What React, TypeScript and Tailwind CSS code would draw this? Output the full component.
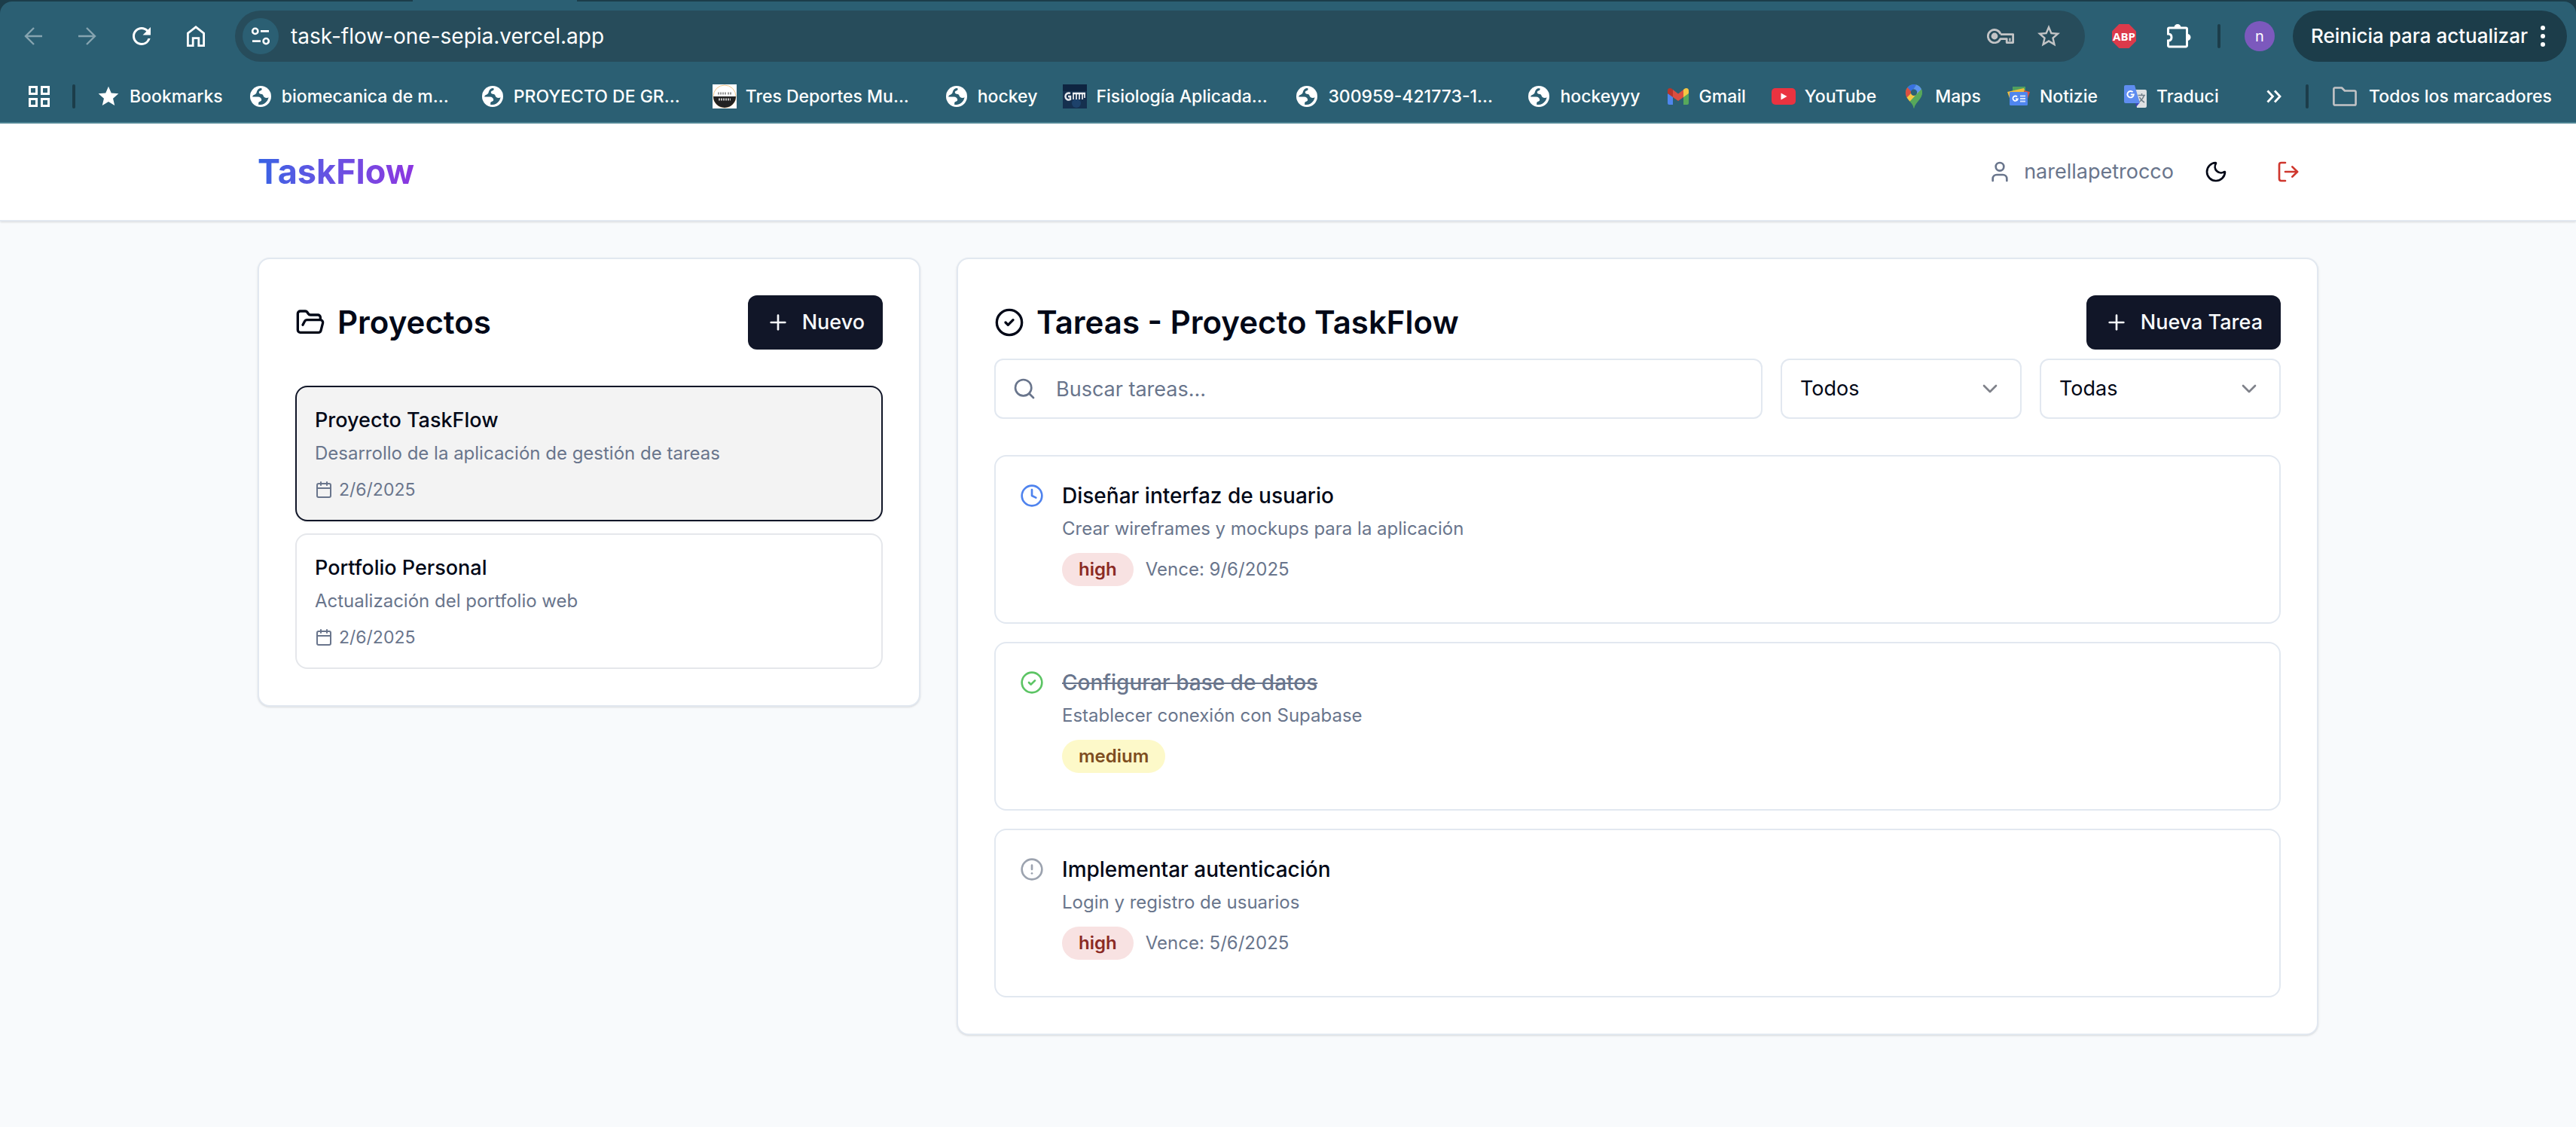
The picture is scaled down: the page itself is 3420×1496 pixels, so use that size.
import React from "react";
import {
  Calendar,
  ChevronDown,
  CircleAlert,
  CircleCheck,
  Clock,
  FolderOpen,
  LogOut,
  Moon,
  Plus,
  Search,
  User,
} from "lucide-react";
import { MdRefresh, MdStar, MdStarBorder } from "react-icons/md";

/* ---------- Browser glyphs ---------- */

function BackArrow({ className = "" }: { className?: string }) {
  return (
    <svg viewBox="0 0 24 24" className={`size-6 ${className}`} fill="none" stroke="currentColor" strokeWidth="2.4" aria-hidden="true">
      <path d="M24 12H2M13 1 2 12l11 11" />
    </svg>
  );
}

function HomeGlyph() {
  return (
    <svg viewBox="0 0 24 28" className="h-7 w-6" fill="none" stroke="currentColor" strokeWidth="2.8" aria-hidden="true">
      <path d="M1.4 10.2 12 1.8l10.6 8.4v16.4h-6.8v-10H8.2v10H1.4z" />
    </svg>
  );
}

function TuneGlyph() {
  return (
    <svg viewBox="0 0 24 24" className="size-6" fill="none" stroke="currentColor" strokeWidth="2.6" aria-hidden="true">
      <circle cx="4.8" cy="5.4" r="3.6" />
      <path d="M12 5.4h11M1 18.6h11" />
      <circle cx="19.2" cy="18.6" r="3.6" />
    </svg>
  );
}

function KeyGlyph() {
  return (
    <svg viewBox="0 0 36 20" className="h-5 w-9" fill="none" stroke="currentColor" strokeWidth="2.8" aria-hidden="true">
      <circle cx="10" cy="10" r="4.4" fill="currentColor" stroke="none" />
      <path d="M18 7.6h16.6v11h-8.4v-5h-8.4A8.6 8.6 0 1 1 18 7.2" strokeLinejoin="round" />
      <path d="M30.4 12.6v4" strokeWidth="2.2" />
    </svg>
  );
}

function AbpGlyph() {
  return (
    <svg viewBox="0 0 32 32" className="size-8" aria-hidden="true">
      <path d="M9.4 0h13.2L32 9.4v13.2L22.6 32H9.4L0 22.6V9.4z" fill="#dc3a4b" />
      <text x="16" y="21.5" textAnchor="middle" fontFamily="Open Sans, sans-serif" fontWeight="700" fontSize="15" fill="#fff">
        ABP
      </text>
    </svg>
  );
}

function PuzzleGlyph() {
  return (
    <svg viewBox="0 0 34 34" className="size-[34px]" aria-hidden="true">
      <path
        d="M5 6h22a1.5 1.5 0 0 1 1.5 1.5v22A1.5 1.5 0 0 1 27 31H5a1.5 1.5 0 0 1-1.5-1.5V23c3 0 4.500-2 4.500-4.500S6.500 14 3.500 14V7.500A1.500 1.500 0 0 1 5 6z"
        fill="none"
        stroke="currentColor"
        strokeWidth="3"
      />
      <path d="M11.500 5.500a4.500 4.500 0 0 1 9 0zM29 14a4.500 4.500 0 0 1 0 9z" fill="currentColor" />
    </svg>
  );
}

function DotsGlyph() {
  return (
    <svg viewBox="0 0 8 32" className="h-8 w-2" fill="currentColor" aria-hidden="true">
      <circle cx="4" cy="5" r="3" />
      <circle cx="4" cy="16" r="3" />
      <circle cx="4" cy="27" r="3" />
    </svg>
  );
}

function AppsGlyph() {
  return (
    <svg viewBox="0 0 28 28" className="size-7" fill="none" stroke="currentColor" strokeWidth="3" aria-hidden="true">
      <path d="M1.500 1.500h9v9h-9zM17.500 1.500h9v9h-9zM1.500 17.500h9v9h-9zM17.500 17.500h9v9h-9z" />
    </svg>
  );
}

function DoubleChevron() {
  return (
    <svg viewBox="0 0 20 18" className="h-[18px] w-5" fill="none" stroke="currentColor" strokeWidth="2.8" aria-hidden="true">
      <path d="m1.500 1.500 7 7.500-7 7.500M11 1.500 18 9l-7 7.500" />
    </svg>
  );
}

function FolderGlyph() {
  return (
    <svg viewBox="0 0 32 26" className="h-[26px] w-8 text-[#c3c4c6]" fill="none" stroke="currentColor" strokeWidth="2.6" strokeLinejoin="round" aria-hidden="true">
      <path d="M3 1.500h9l4 4h13a1.600 1.600 0 0 1 1.600 1.600v15.800a1.600 1.600 0 0 1-1.600 1.600H3a1.600 1.600 0 0 1-1.600-1.600V3A1.500 1.500 0 0 1 3 1.500z" />
    </svg>
  );
}

/* ---------- Bookmark icons ---------- */

function GlobeIcon() {
  return (
    <svg viewBox="0 0 28 28" className="size-7" aria-hidden="true">
      <circle cx="14" cy="14" r="14" fill="#fff" />
      <path
        d="M14.500 2.900C12 3 10.500 4.600 9.500 6.200c-1 1.800-.5 3.400-2.500 4.800-1.600 1.100-3.300 1.200-3.900 3.400h7.400c2.600 0 4.700 1.800 4.700 4.200 0 1.200-.9 2.200-2.600 2.400-1.200.2-1.500 1-1.400 3.900 4.600.9 9-1.200 11.400-4.900 1.100-1.700 1.700-3.400 2-4.700-1.800 1.100-4.200 1-5.800-.4-1.600-1.500-1.200-3.400-3.300-3.900-2.200-.5-3.700-.6-3.700-2.600 0-2.300 3.400-1.500 3.800-3.700.1-.7.2-1.400-1.100-1.800z"
        fill="#2b5f73"
      />
      <path d="M17 3.200c-.3 3-3.300 2.600-3.300 4.600 0 1.700 2.800 1.200 4.300 2.100 2 1.200 1.300 3.600 3.200 4.700 1.700 1 4 .6 5.300-.6 0-5-3.500-10-9.500-10.800z" fill="#fff" />
    </svg>
  );
}

function StarIcon() {
  return <MdStar className="size-8 text-white" aria-hidden="true" />;
}

function LetrasIcon() {
  return (
    <svg viewBox="0 0 32 32" className="size-8" aria-hidden="true">
      <path d="M0 0h32v32H0z" fill="#fff" />
      <circle cx="16" cy="16" r="15" fill="#fff" stroke="#f0c48a" strokeWidth="1" />
      <path d="M1 16h30a15 15 0 0 1-30 0z" fill="#222" />
      <path d="M7 12h11M20 12h5" stroke="#999" strokeWidth="3" strokeDasharray="2 1" />
      <path d="M8 20h16" stroke="#bbb" strokeWidth="3" strokeDasharray="2 1" />
    </svg>
  );
}

function FisioIcon() {
  return (
    <svg viewBox="0 0 32 32" className="size-8" aria-hidden="true">
      <path d="M0 0h32v32H0z" fill="#15304f" />
      <path d="M0 0h32v9H0z" fill="#0e2440" />
      <circle cx="18" cy="25" r="6" fill="#1d426b" />
      <path d="M10 12a4.500 4.500 0 1 0 0 8v-4H7" fill="none" stroke="#e4e6ea" strokeWidth="2.500" />
      <path d="M14 12v8M18 12v8M22 12v8M26 12v8M29 12v6" stroke="#cfd3da" strokeWidth="2" />
      <path d="M13 12h17" stroke="#eceef1" strokeWidth="2.500" />
    </svg>
  );
}

function GmailIcon() {
  return (
    <svg viewBox="0 0 30 24" className="h-6 w-[30px]" aria-hidden="true">
      <path d="M1 8v13a2 2 0 0 0 2 2h5V12z" fill="#4f86ee" />
      <path d="M22 12v11h5a2 2 0 0 0 2-2V8z" fill="#57a85b" />
      <path d="M22 3v10l7-5V4c0-3-3.500-4-5.500-2.200z" fill="#f5c643" />
      <path d="M8 3v10l7 5 7-5V3l-7 5.500z" fill="#da4f41" />
      <path d="M1 4v4l7 5V3L6.500 1.800C4.500 0 1 1 1 4z" fill="#b8352a" />
    </svg>
  );
}

function YouTubeIcon() {
  return (
    <svg viewBox="0 0 32 24" className="h-6 w-8" aria-hidden="true">
      <rect y="1" width="32" height="22" rx="5" fill="#ea3340" />
      <path d="M12.500 7.500v9l8-4.500z" fill="#fff" />
    </svg>
  );
}

function MapsIcon() {
  return (
    <svg viewBox="0 0 24 32" className="h-8 w-6" aria-hidden="true">
      <path d="M12 0C5.500 0 1 5 1 11c0 4 2 7 4.500 10S11 27 12 32c1-5 4-8 6.500-11S23 15 23 11c0-6-4.500-11-11-11z" fill="#57a85b" />
      <path d="M3.500 4C-.5 9 .8 14.800 3 18l7.500-9z" fill="#da4f41" />
      <path d="M3.500 4A11 11 0 0 1 15.200.5L9 10.500z" fill="#3871e0" />
      <path d="M15.200.5A11 11 0 0 1 22 6.500l-7.500 8L10 9z" fill="#5b93f0" />
      <path d="M2.600 17.500c1.200 2 2.600 3.500 4 5.200L22 6.500 15 13l-5-3z" fill="#f5c643" />
      <path d="M22 6.500c2.500 6-1 11-3.500 14.500S13 27 12 32c-.8-4.500-3-7-5.400-9.300z" fill="#57a85b" />
      <circle cx="12" cy="10.800" r="4.200" fill="#2b5f73" />
    </svg>
  );
}

function NewsIcon() {
  return (
    <svg viewBox="0 0 30 26" className="h-[26px] w-[30px]" aria-hidden="true">
      <path d="M7 0h17v8H7z" fill="#4f9f5f" />
      <path d="m0 7 22-5 3 10L4 18z" fill="#f0bd3c" />
      <path d="m22 5 8 2-4 12-4-2z" fill="#da4f41" />
      <rect x="3" y="7" width="24" height="18" rx="1.5" fill="#4f86ee" />
      <path d="M13 13.500a3.200 3.200 0 1 0 .8 2.800H11" fill="none" stroke="#fff" strokeWidth="1.8" />
      <path d="M17 12.500h7M17 16h7M17 19.500h7" stroke="#d5e2fb" strokeWidth="1.8" />
    </svg>
  );
}

function TranslateIcon() {
  return (
    <svg viewBox="0 0 32 32" className="size-8" aria-hidden="true">
      <path d="M14 7h15a2 2 0 0 1 2 2v20a2 2 0 0 1-2 2H18z" fill="#dfe1e3" />
      <path d="M16 24h6l-5 6z" fill="#3b46b5" />
      <path d="M3 1h12l7 24H3a2 2 0 0 1-2-2V3a2 2 0 0 1 2-2z" fill="#5f8df0" />
      <path d="M19.500 14.500H29M24.500 12v2.500M27.500 14.500c-1 4-3.500 6.500-6 8.500M21.500 17c1.500 3.500 3.500 5.200 6.500 7" stroke="#72808a" strokeWidth="1.5" fill="none" />
      <path d="M12.600 10.200a4.200 4.200 0 1 0 1.200 3.300h-4" stroke="#fff" strokeWidth="1.9" fill="none" />
    </svg>
  );
}

const bookmarks: { label: string; icon: React.ReactNode; wide?: boolean }[] = [
  { label: "Bookmarks", icon: <StarIcon /> },
  { label: "biomecanica de m...", icon: <GlobeIcon />, wide: true },
  { label: "PROYECTO DE GR...", icon: <GlobeIcon />, wide: true },
  { label: "Tres Deportes Mu...", icon: <LetrasIcon />, wide: true },
  { label: "hockey", icon: <GlobeIcon /> },
  { label: "Fisiología Aplicada...", icon: <FisioIcon />, wide: true },
  { label: "300959-421773-1...", icon: <GlobeIcon />, wide: true },
  { label: "hockeyyy", icon: <GlobeIcon /> },
  { label: "Gmail", icon: <GmailIcon /> },
  { label: "YouTube", icon: <YouTubeIcon /> },
  { label: "Maps", icon: <MapsIcon /> },
  { label: "Notizie", icon: <NewsIcon /> },
  { label: "Traduci", icon: <TranslateIcon /> },
];

function ToolButton({ label, children }: { label: string; children: React.ReactNode }) {
  return (
    <button type="button" aria-label={label} className="flex h-[68px] w-[72px] shrink-0 items-center justify-center">
      {children}
    </button>
  );
}

function BrowserChrome() {
  return (
    <div className="relative bg-[#1c3d4a] pt-0.5 text-white">
      <div className="absolute top-0 left-[548px] h-0.5 w-[218px] bg-[#2b5f73]" />
      <div className="rounded-t-2xl border-b-2 border-[#4f8494] bg-[#2b5f73]">
        <div className="flex h-[92px] items-center pr-3 pl-2">
          <ToolButton label="Atrás">
            <BackArrow className="text-[#86a4b0]" />
          </ToolButton>
          <ToolButton label="Adelante">
            <BackArrow className="rotate-180 text-[#86a4b0]" />
          </ToolButton>
          <ToolButton label="Recargar">
            <MdRefresh className="size-9" />
          </ToolButton>
          <ToolButton label="Inicio">
            <HomeGlyph />
          </ToolButton>
          <div className="ml-4 flex h-[68px] min-w-0 flex-1 items-center rounded-full bg-[#274c5b] pr-4 pl-2.5">
            <button type="button" aria-label="Información del sitio" className="flex size-12 shrink-0 items-center justify-center rounded-full bg-[#2b5f73]">
              <TuneGlyph />
            </button>
            <input
              type="text"
              aria-label="Dirección"
              defaultValue="task-flow-one-sepia.vercel.app"
              className="ml-4 min-w-0 flex-1 bg-transparent text-[28px] leading-10 outline-none"
            />
            <button type="button" aria-label="Contraseñas" className="flex h-12 w-16 items-center justify-center text-[#c3c4c6]">
              <KeyGlyph />
            </button>
            <button type="button" aria-label="Añadir a marcadores" className="flex h-12 w-16 items-center justify-center text-[#c3c4c6]">
              <MdStarBorder className="size-9" />
            </button>
          </div>
          <div className="ml-4 flex shrink-0 items-center">
            <ToolButton label="Bloqueador de anuncios">
              <AbpGlyph />
            </ToolButton>
            <ToolButton label="Extensiones">
              <PuzzleGlyph />
            </ToolButton>
            <div className="mx-4 h-8 w-1 rounded-full bg-[#1c3d4a]" />
            <ToolButton label="Perfil">
              <span className="flex size-10 items-center justify-center rounded-full bg-[#7c59bd] text-xl leading-6">n</span>
            </ToolButton>
            <button type="button" className="ml-2 flex h-[68px] w-[364px] items-center justify-between rounded-full bg-[#1c3d4a] pr-7 pl-6 text-[26px] leading-10 font-medium">
              Reinicia para actualizar
              <DotsGlyph />
            </button>
          </div>
        </div>
        <div className="flex h-[68px] items-center pr-8 pl-[38px] text-[23px] leading-8 font-medium">
          <button type="button" aria-label="Aplicaciones">
            <AppsGlyph />
          </button>
          <div className="ml-[30px] h-8 w-1 rounded-full bg-[#1c3d4a]" />
          <nav aria-label="Marcadores" className="ml-7 flex items-center gap-[34px]">
            {bookmarks.map((b) => (
              <a key={b.label} href="#" className={`flex shrink-0 items-center gap-3 whitespace-nowrap ${b.wide ? "w-[274px]" : ""}`}>
                <span className="flex size-8 shrink-0 items-center justify-center">{b.icon}</span>
                {b.label}
              </a>
            ))}
          </nav>
          <button type="button" aria-label="Más marcadores" className="ml-auto">
            <DoubleChevron />
          </button>
          <div className="mx-8 h-8 w-1 rounded-full bg-[#1c3d4a]" />
          <button type="button" className="flex items-center gap-4 whitespace-nowrap">
            <FolderGlyph />
            Todos los marcadores
          </button>
        </div>
      </div>
    </div>
  );
}

/* ---------- Application ---------- */

const projects = [
  { name: "Proyecto TaskFlow", description: "Desarrollo de la aplicación de gestión de tareas", date: "2/6/2025", selected: true },
  { name: "Portfolio Personal", description: "Actualización del portfolio web", date: "2/6/2025", selected: false },
];

type Status = "progress" | "done" | "pending";

const tasks: { title: string; description: string; status: Status; priority: "high" | "medium"; due?: string }[] = [
  { title: "Diseñar interfaz de usuario", description: "Crear wireframes y mockups para la aplicación", status: "progress", priority: "high", due: "9/6/2025" },
  { title: "Configurar base de datos", description: "Establecer conexión con Supabase", status: "done", priority: "medium" },
  { title: "Implementar autenticación", description: "Login y registro de usuarios", status: "pending", priority: "high", due: "5/6/2025" },
];

const priorityStyle = {
  high: "bg-[#f8e2e2] text-[#8b2a24]",
  medium: "bg-[#fdf9c9] text-[#7d4d1f]",
};

function StatusIcon({ status }: { status: Status }) {
  if (status === "done") return <CircleCheck className="size-8 text-[#5cc464]" />;
  if (status === "progress") return <Clock className="size-8 text-[#4f83ee]" />;
  return <CircleAlert className="size-8 text-[#9ca3af]" />;
}

function PrimaryButton({ children }: { children: React.ReactNode }) {
  return (
    <button type="button" className="flex h-[72px] shrink-0 items-center gap-4 rounded-xl bg-[#111628] px-6 text-[27px] leading-10 font-medium text-[#f8fafc]">
      <Plus className="size-8" />
      {children}
    </button>
  );
}

function FilterSelect({ label, options }: { label: string; options: string[] }) {
  return (
    <div className="relative w-80 shrink-0">
      <select aria-label={label} className="h-20 w-full appearance-none rounded-xl border-2 border-[#e2e8f0] bg-white px-6 text-[27px] leading-10 text-[#020817]">
        {options.map((o) => (
          <option key={o}>{o}</option>
        ))}
      </select>
      <ChevronDown className="pointer-events-none absolute top-6 right-[26px] size-8 opacity-50" />
    </div>
  );
}

function AppHeader() {
  return (
    <header className="border-b-2 border-[#e2e8f0] bg-white shadow-sm">
      <div className="mx-auto flex h-32 max-w-[2800px] items-center justify-between px-8">
        <h1 className="bg-linear-to-r from-[#3563e4] to-[#8b35e0] bg-clip-text text-[45px] leading-[64px] font-bold text-transparent">TaskFlow</h1>
        <div className="flex items-center gap-4">
          <div className="flex items-center gap-4 text-[27px] leading-10 text-[#69758c]">
            <User className="size-8" />
            <span>narellapetrocco</span>
          </div>
          <button type="button" aria-label="Cambiar tema" className="flex size-20 items-center justify-center">
            <Moon className="size-8" />
          </button>
          <button type="button" aria-label="Cerrar sesión" className="flex size-20 items-center justify-center text-[#cf372e]">
            <LogOut className="size-8" />
          </button>
        </div>
      </div>
    </header>
  );
}

export default function App() {
  return (
    <div className="min-h-screen bg-[#f8fafc] font-['Inter',sans-serif] text-[#020817]">
      <BrowserChrome />
      <AppHeader />
      <main className="mx-auto grid max-w-[2800px] grid-cols-3 items-start gap-12 px-8 py-12">
        <section className="rounded-2xl border-2 border-[#e2e8f0] bg-white p-12 shadow-sm">
          <div className="flex items-center justify-between">
            <h2 className="flex items-center gap-4 text-[42px] leading-[48px] font-semibold">
              <FolderOpen className="size-10" />
              Proyectos
            </h2>
            <PrimaryButton>Nuevo</PrimaryButton>
          </div>
          <div className="mt-12 flex flex-col gap-4">
            {projects.map((p) => (
              <button
                key={p.name}
                type="button"
                aria-pressed={p.selected}
                className={`rounded-2xl border-2 p-6 text-left ${p.selected ? "border-[#111628] bg-[#f3f3f3] shadow-sm" : "border-[#e5e7eb] bg-white"}`}
              >
                <h3 className="text-[27px] leading-10 font-medium">{p.name}</h3>
                <p className="mt-2 text-2xl text-[#69758c]">{p.description}</p>
                <p className="mt-4 flex items-center gap-2 text-[23px] leading-8 text-[#69758c]">
                  <Calendar className="size-6" />
                  {p.date}
                </p>
              </button>
            ))}
          </div>
        </section>

        <section className="col-span-2 rounded-2xl border-2 border-[#e2e8f0] bg-white p-12 shadow-sm">
          <div className="flex items-center justify-between">
            <h2 className="flex items-center gap-4 text-[42px] leading-[48px] font-semibold">
              <CircleCheck className="size-10" />
              Tareas - Proyecto TaskFlow
            </h2>
            <PrimaryButton>Nueva Tarea</PrimaryButton>
          </div>
          <div className="mt-3 flex gap-6">
            <div className="relative min-w-0 flex-1">
              <Search className="pointer-events-none absolute top-6 left-6 size-8 text-[#69758c]" />
              <input
                type="text"
                aria-label="Buscar tareas"
                placeholder="Buscar tareas..."
                className="h-20 w-full rounded-xl border-2 border-[#e2e8f0] bg-white pr-6 pl-20 text-[27px] leading-10 placeholder:text-[#69758c]"
              />
            </div>
            <FilterSelect label="Estado" options={["Todos", "Pendiente", "En progreso", "Completada"]} />
            <FilterSelect label="Prioridad" options={["Todas", "Alta", "Media", "Baja"]} />
          </div>
          <ul className="mt-12 flex flex-col gap-6">
            {tasks.map((t) => (
              <li key={t.title} className="flex items-start gap-6 rounded-2xl border-2 border-[#e2e8f0] bg-white px-8 pt-8 pb-12">
                <button type="button" aria-label="Cambiar estado" className="mt-1">
                  <StatusIcon status={t.status} />
                </button>
                <div>
                  <h3 className={`text-[28px] leading-10 font-medium ${t.status === "done" ? "text-[#69758c] line-through" : ""}`}>{t.title}</h3>
                  <p className="mt-2 text-2xl text-[#69758c]">{t.description}</p>
                  <div className="mt-4 flex items-center gap-4">
                    <span className={`rounded-full border-2 border-transparent px-5 py-1 text-2xl font-semibold ${priorityStyle[t.priority]}`}>{t.priority}</span>
                    {t.due && <span className="text-2xl text-[#69758c]">Vence: {t.due}</span>}
                  </div>
                </div>
              </li>
            ))}
          </ul>
        </section>
      </main>
    </div>
  );
}
